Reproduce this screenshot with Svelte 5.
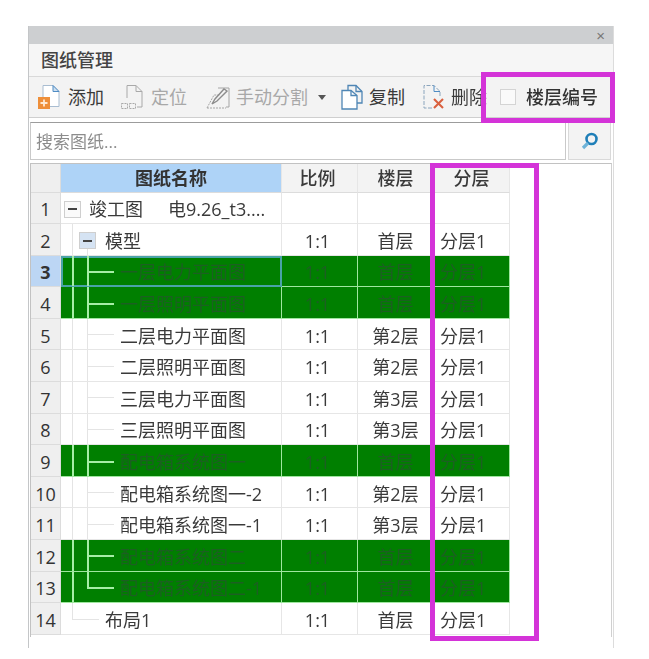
<script>
  const rows = [
    { n: 1, name: '竣工图', extra: '电9.26_t3....', ratio: '', floor: '', layer: '', box: 1, text: 28 },
    { n: 2, name: '模型', ratio: '1:1', floor: '首层', layer: '分层1', box: 2, text: 44 },
    { n: 3, name: '一层电力平面图', ratio: '1:1', floor: '首层', layer: '分层1', green: 1, sel: 1, text: 59, h: 1 },
    { n: 4, name: '一层照明平面图', ratio: '1:1', floor: '首层', layer: '分层1', green: 1, text: 59, h: 1 },
    { n: 5, name: '二层电力平面图', ratio: '1:1', floor: '第2层', layer: '分层1', text: 59, h: 1 },
    { n: 6, name: '二层照明平面图', ratio: '1:1', floor: '第2层', layer: '分层1', text: 59, h: 1 },
    { n: 7, name: '三层电力平面图', ratio: '1:1', floor: '第3层', layer: '分层1', text: 59, h: 1 },
    { n: 8, name: '三层照明平面图', ratio: '1:1', floor: '第3层', layer: '分层1', text: 59, h: 1 },
    { n: 9, name: '配电箱系统图一', ratio: '1:1', floor: '首层', layer: '分层1', green: 1, text: 59, h: 1 },
    { n: 10, name: '配电箱系统图一-2', ratio: '1:1', floor: '第2层', layer: '分层1', text: 59, h: 1 },
    { n: 11, name: '配电箱系统图一-1', ratio: '1:1', floor: '第3层', layer: '分层1', text: 59, h: 1 },
    { n: 12, name: '配电箱系统图二', ratio: '1:1', floor: '首层', layer: '分层1', green: 1, text: 59, h: 1 },
    { n: 13, name: '配电箱系统图二-1', ratio: '1:1', floor: '首层', layer: '分层1', green: 1, text: 59, h: 1, last: 1 },
    { n: 14, name: '布局1', ratio: '1:1', floor: '首层', layer: '分层1', text: 44, h14: 1 }
  ];
</script>

<div class="panel">
  <div class="titlebar"><span class="close">×</span></div>
  <div class="heading">图纸管理</div>

  <div class="toolbar">
    <div class="tool tool-add">
      <svg width="26" height="28" viewBox="0 0 26 28">
        <path d="M6 2.500h10l6 6v15H6z" fill="#fff" stroke="#a9bdd1" />
        <path d="M16 2.500v6h6z" fill="#cfe0f0" stroke="#4f8cc4" />
        <rect x="1" y="14" width="12" height="12" fill="#ee8f3a" />
        <path d="M7 16.500v7M3.500 20h7" stroke="#ffe9d2" stroke-width="1.800" />
      </svg>
      <span>添加</span>
    </div>
    <div class="tool tool-locate off">
      <svg width="26" height="28" viewBox="0 0 26 28" fill="none" stroke="#a9a9a9">
        <path d="M7 15V2.500h9l6 6V24h-5" />
        <path d="M16 2.500v6h6" />
        <path d="M1.500 20.500h6v5h-6zM9.500 20.500h6v5h-6z" stroke-dasharray="2 1" />
      </svg>
      <span>定位</span>
    </div>
    <div class="tool tool-split off">
      <svg width="26" height="28" viewBox="0 0 26 28" fill="none" stroke="#a5a5a5">
        <path d="M13 5h11v19h-3" />
        <path d="M2 25h19M2 25l7-13h6" stroke-dasharray="2 1" />
        <path d="M7 21l3-5 9-10 3 2-10 10z" stroke="#8c8c8c" stroke-width="1.400" />
      </svg>
      <span>手动分割</span>
    </div>
    <i class="caret"></i>
    <div class="tool tool-copy">
      <svg width="24" height="28" viewBox="0 0 24 28" fill="none" stroke="#4f86b5" stroke-width="1.300">
        <path d="M8 7V2.500h8l6 6V20h-5" />
        <path d="M16 2.500v6h6" />
        <path d="M2 7.500h9l6 5V26H2z" fill="#fff" />
        <path d="M11 7.500v5h6" />
      </svg>
      <span>复制</span>
    </div>
    <div class="tool tool-del">
      <svg width="25" height="28" viewBox="0 0 25 28" fill="none">
        <path d="M11 25H3V2.500h10l6 6V14" stroke="#8ba5bd" stroke-dasharray="4 1.500" />
        <path d="M13 2.500v6h6" stroke="#4f8cc4" />
        <path d="M13 16l9 9M22 16l-9 9" stroke="#d9603f" stroke-width="2.100" />
      </svg>
      <span>删除</span>
    </div>
    <div class="checkbox"></div>
    <span class="floorno">楼层编号</span>
  </div>

  <div class="search">
    <div class="input">搜索图纸...</div>
    <div class="btn">
      <svg width="20" height="20" viewBox="0 0 20 20" fill="none">
        <circle cx="11.500" cy="8" r="5" stroke="#1f7fb8" stroke-width="2.600" />
        <path d="M8 12l-5 5" stroke="#6fb3d8" stroke-width="3.200" />
      </svg>
    </div>
  </div>

  <div class="table">
    <div class="row head">
      <div class="rh"></div>
      <div class="cell hname">图纸名称</div>
      <div class="cell ratio">比例</div>
      <div class="cell">楼层</div>
      <div class="cell">分层</div>
    </div>
    {#each rows as r}
      <div class="row" class:green={r.green} class:sel={r.sel}>
        <div class="rh" class:rhsel={r.sel}>{r.n}</div>
        <div class="cell name">
          {#if r.n >= 3 && r.n <= 13}
            <i class="g v1"></i>
            <i class="g v2" class:halfv={r.last}></i>
          {/if}
          {#if r.n === 2}<i class="g v1"></i><i class="g v2b"></i>{/if}
          {#if r.n === 14}<i class="g v1 halfv"></i><i class="g h14"></i>{/if}
          {#if r.h}<i class="g h"></i>{/if}
          {#if r.box}
            <i class="box" class:box2={r.box === 2}></i>
          {/if}
          <span class="label" style="margin-left:{r.text}px">{r.name}</span>
          {#if r.extra}<span class="extra">{r.extra}</span>{/if}
        </div>
        <div class="cell ratio">{r.ratio}</div>
        <div class="cell">{r.floor}</div>
        <div class="cell layer">{r.layer}</div>
      </div>
    {/each}
  </div>

  <div class="mark mark-a"></div>
  <div class="mark mark-b"></div>
</div>

<style>
  :global(body) {
    margin: 0;
    background: #fff;
  }
  .panel {
    position: relative;
    box-sizing: border-box;
    width: 586px;
    height: 622px;
    margin: 26px 0 0 28px;
    border-right: 1px solid #dcdcdc;
    border-left: 1px solid #c4c6c8;
    font-family: "Open Sans", "Noto Sans CJK SC", sans-serif;
    font-size: 18px;
    line-height: 1;
    color: #3a3a3a;
    filter: blur(0.5px);
  }
  .titlebar {
    display: flex;
    justify-content: flex-end;
    align-items: center;
    height: 18px;
    background: #cdcfd1;
    padding-right: 8px;
  }
  .close {
    font: 15px "Liberation Sans", sans-serif;
    color: #777;
  }
  .heading {
    box-sizing: border-box;
    height: 33px;
    padding: 7px 0 0 12px;
    background: #f6f6f6;
    border-bottom: 1px solid #d9d9d9;
    font-weight: 500;
    color: #444;
  }
  .toolbar {
    display: flex;
    align-items: center;
    box-sizing: border-box;
    height: 41px;
    padding-left: 8px;
    background: #f3f3f3;
    border-bottom: 1px solid #cfcfcf;
  }
  .tool {
    display: flex;
    align-items: center;
    gap: 5px;
  }
  .off {
    color: #a8a8a8;
  }
  .tool-locate {
    margin-left: 16px;
  }
  .tool-split {
    margin-left: 18px;
  }
  .caret {
    width: 0;
    height: 0;
    margin-left: 10px;
    border: 4px solid transparent;
    border-top: 5px solid #555;
    border-bottom: 0;
  }
  .tool-copy {
    margin-left: 14px;
  }
  .tool-del {
    margin-left: 16px;
  }
  .checkbox {
    box-sizing: border-box;
    width: 16px;
    height: 16px;
    margin-left: 13px;
    background: #fafafa;
    border: 1px solid #d4d4d4;
  }
  .floorno {
    margin-left: 10px;
    font-weight: 500;
    color: #333;
  }
  .search {
    display: flex;
    gap: 2px;
    height: 38px;
    margin: 4px 2px 0 1px;
  }
  .input {
    flex: 1;
    box-sizing: border-box;
    padding: 10px 0 0 5px;
    border: 1px solid #c9c9c9;
    border-top-color: #9c9c9c;
    background: #fff;
    color: #8c8c8c;
    font-size: 17px;
  }
  .btn {
    display: flex;
    justify-content: center;
    align-items: center;
    width: 41px;
    background: #f3f3f3;
    border: 1px solid #d9d9d9;
  }
  .table {
    box-sizing: border-box;
    height: 474px;
    margin: 3px 1px 0 1px;
    border: 1px solid #c2c2c2;
    border-bottom: 0;
    border-right-color: #d0d0d0;
  }
  .row {
    display: grid;
    grid-template-columns: 30px 221px 76px 76px 76px;
    height: 31.600px;
  }
  .row.head {
    height: 28.500px;
  }
  .rh {
    display: flex;
    justify-content: center;
    align-items: center;
    box-sizing: border-box;
    padding-top: 3px;
    background: #efefef;
    border-bottom: 1px solid #dcdcdc;
    border-right: 1px solid #dcdcdc;
    font: 18px "Open Sans", sans-serif;
    color: #333;
  }
  .rhsel {
    background: #bcd6f4;
    font-weight: 700;
  }
  .cell {
    position: relative;
    display: flex;
    justify-content: center;
    align-items: center;
    box-sizing: border-box;
    padding-top: 3px;
    overflow: hidden;
    border-right: 1px solid #e6e6e6;
    border-bottom: 1px solid #e6e6e6;
    white-space: nowrap;
  }
  .ratio {
    padding-right: 4px;
  }
  .layer {
    justify-content: flex-start;
    padding-left: 6px;
  }
  .head .cell {
    padding-top: 0;
    background: #f3f3f3;
    font-weight: 500;
    border-bottom-color: #dcdcdc;
  }
  .head .hname {
    background: #aed3f7;
    font-weight: 700;
    color: #333;
  }
  .name {
    justify-content: flex-start;
  }
  .green .cell {
    background: #007f00;
    border-color: #9fe69f;
    color: #1c5f22;
  }
  .sel .name {
    outline: 2px solid #4aa3a8;
    outline-offset: -2px;
  }
  .g {
    position: absolute;
    display: block;
    background: #e4e4e4;
  }
  .green .g {
    background: #a6eea6;
  }
  .v1 {
    left: 11px;
    top: 0;
    bottom: 0;
    width: 1px;
  }
  .v2,
  .v2b {
    left: 26px;
    top: 0;
    bottom: 0;
    width: 1px;
  }
  .v2b {
    top: 50%;
  }
  .halfv {
    bottom: 50%;
  }
  .h {
    left: 26px;
    top: 50%;
    width: 27px;
    height: 1px;
  }
  .h14 {
    left: 11px;
    top: 50%;
    width: 27px;
    height: 1px;
  }
  .green .v1,
  .green .v2 {
    width: 2px;
  }
  .green .h {
    height: 2px;
  }
  .box {
    position: absolute;
    left: 3px;
    top: 8px;
    box-sizing: border-box;
    width: 17px;
    height: 17px;
    background: #fafafa;
    border: 1px solid #cfcfcf;
  }
  .box::after {
    content: "";
    position: absolute;
    left: 3px;
    right: 3px;
    top: 6.500px;
    height: 2px;
    background: #444;
  }
  .box2 {
    left: 18px;
    background: #d5e3f3;
  }
  .extra {
    margin-left: 25px;
  }
  .mark {
    position: absolute;
    box-sizing: border-box;
    border: 5px solid #d433d8;
  }
  .mark-a {
    left: 452px;
    top: 46px;
    width: 134px;
    height: 51px;
  }
  .mark-b {
    left: 401px;
    top: 137px;
    width: 109px;
    height: 478px;
  }
</style>
